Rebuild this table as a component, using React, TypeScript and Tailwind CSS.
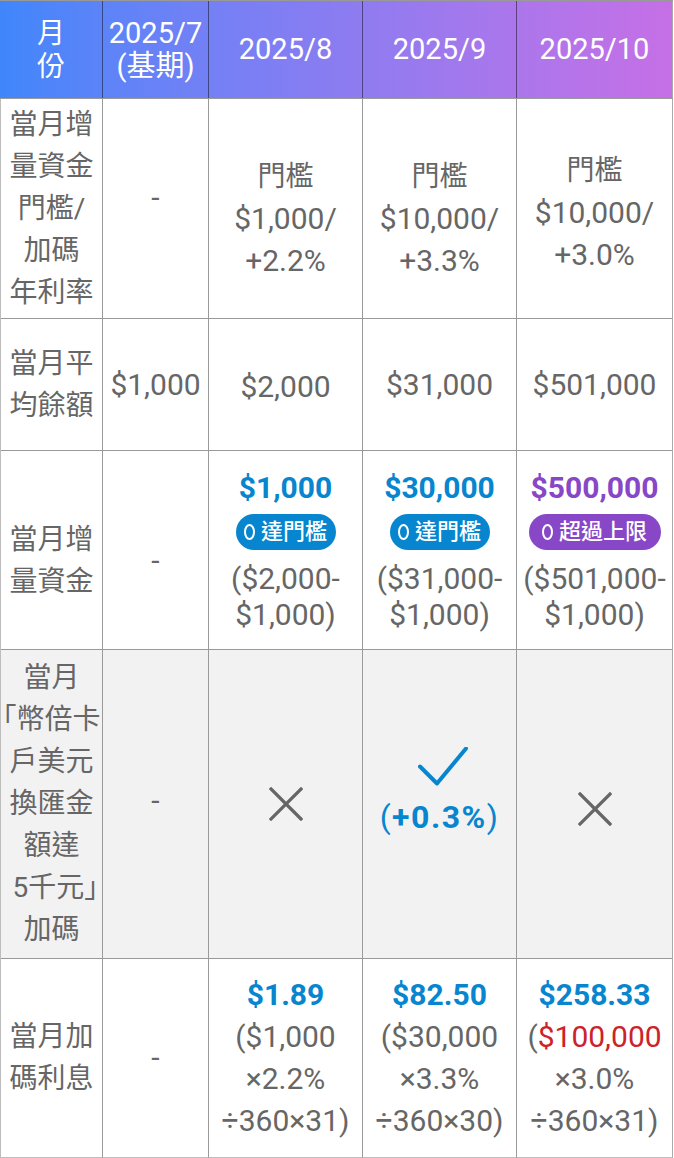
import React from "react";

const FONT = "[font-family:Roboto,'Noto_Sans_CJK_TC',sans-serif]";
const GRAY = "text-[#666666]";
const BLUE = "text-[#0786cf]";
const PURPLE = "text-[#8747c7]";

function Lines({ lines, className = "" }: { lines: React.ReactNode[]; className?: string }) {
  return (
    <>
      {lines.map((l, i) => (
        <div key={i} className={"whitespace-nowrap [text-spacing-trim:trim-start] " + className}>
          {l}
        </div>
      ))}
    </>
  );
}

const cell =
  "flex flex-col items-center justify-center text-center border-r border-b border-[#9a9a9a] text-[30px] leading-[42px] font-normal " +
  GRAY;

function Cross() {
  return (
    <svg width="34" height="34" viewBox="0 0 34 34" fill="none">
      <path d="M2 2 L32 32 M32 2 L2 32" stroke="#666666" strokeWidth="3.2" strokeLinecap="square" />
    </svg>
  );
}

function Check() {
  return (
    <svg width="50" height="40" viewBox="0 0 50 40" fill="none">
      <path d="M2 19.5 L19 36.5 L48 1.5" stroke="#0786cf" strokeWidth="4" strokeLinecap="round" strokeLinejoin="round" />
    </svg>
  );
}

function Badge({ label, color, w }: { label: string; color: string; w: string }) {
  return (
    <div
      className={
        "flex items-center justify-center h-[36px] rounded-full text-white text-[22px] leading-[36px] font-medium gap-[6px] " +
        color +
        " " +
        w
      }
    >
      <span className="block shrink-0 w-[11px] h-[16px] rounded-[50%] border-[2.5px] border-white" />
      <span>{label}</span>
    </div>
  );
}

const cjk = "text-[28px]";

export default function App() {
  const hcell =
    "flex flex-col items-center justify-center text-center border-r border-black/45 text-white text-[29px] leading-[33px]";
  return (
    <div className={"w-[673px] bg-white " + FONT}>
      {/* Header */}
      <div className="grid grid-cols-[103px_106px_154px_154px_156px] h-[99px] border-t border-b border-t-[#999999] border-b-[#9a9a9a] bg-linear-to-r from-[#3f86fb] via-[#8a7cf1] to-[#c66fe6]">
        <div className={hcell}>
          <Lines lines={["月", "份"]} className="text-[28px]" />
        </div>
        <div className={hcell}>
          <Lines lines={["2025/7", "(基期)"]} />
        </div>
        <div className={hcell}>2025/8</div>
        <div className={hcell}>2025/9</div>
        <div className="flex flex-col items-center justify-center text-center border-r border-[#aaaaaa] text-white text-[29px] leading-[33px]">
          2025/10
        </div>
      </div>

      {/* Body */}
      <div className="grid grid-cols-[102px_106px_154px_154px_156px] grid-rows-[220px_132px_199px_309px_199px] border-l border-[#bdbdbd]">
        {/* Row 1 */}
        <div className={cell}>
          <Lines lines={["當月增", "量資金", "門檻/", "加碼", "年利率"]} className={cjk} />
        </div>
        <div className={cell + " pb-[22px]"}>-</div>
        <div className={cell + " pt-[20px]"}>
          <Lines lines={[<span className={cjk}>門檻</span>, "$1,000/", "+2.2%"]} />
        </div>
        <div className={cell + " pt-[20px]"}>
          <Lines lines={[<span className={cjk}>門檻</span>, "$10,000/", "+3.3%"]} />
        </div>
        <div className={cell + " pt-[8px] border-r-[#aaaaaa]"}>
          <Lines lines={[<span className={cjk}>門檻</span>, "$10,000/", "+3.0%"]} />
        </div>

        {/* Row 2 */}
        <div className={cell}>
          <Lines lines={["當月平", "均餘額"]} className={cjk} />
        </div>
        <div className={cell}>$1,000</div>
        <div className={cell + " pt-[4px]"}>$2,000</div>
        <div className={cell}>$31,000</div>
        <div className={cell + " border-r-[#aaaaaa]"}>$501,000</div>

        {/* Row 3 */}
        <div className={cell + " pt-[22px]"}>
          <Lines lines={["當月增", "量資金"]} className={cjk} />
        </div>
        <div className={cell + " pt-[22px]"}>-</div>
        <div className={cell}>
          <div className={"font-bold text-[30px] leading-[42px] " + BLUE}>$1,000</div>
          <div className="mt-[5px]">
            <Badge label="達門檻" color="bg-[#0786cf]" w="w-[100px]" />
          </div>
          <div className="mt-[11px] leading-[36px]">
            <Lines lines={["($2,000-", "$1,000)"]} />
          </div>
        </div>
        <div className={cell}>
          <div className={"font-bold text-[30px] leading-[42px] " + BLUE}>$30,000</div>
          <div className="mt-[5px]">
            <Badge label="達門檻" color="bg-[#0786cf]" w="w-[100px]" />
          </div>
          <div className="mt-[11px] leading-[36px]">
            <Lines lines={["($31,000-", "$1,000)"]} />
          </div>
        </div>
        <div className={cell + " border-r-[#aaaaaa]"}>
          <div className={"font-bold text-[30px] leading-[42px] " + PURPLE}>$500,000</div>
          <div className="mt-[5px]">
            <Badge label="超過上限" color="bg-[#8747c7]" w="w-[132px]" />
          </div>
          <div className="mt-[11px] leading-[36px]">
            <Lines lines={["($501,000-", "$1,000)"]} />
          </div>
        </div>

        {/* Row 4 */}
        <div className={cell + " bg-[#f2f2f2]"}>
          <Lines
            lines={[
              "當月",
              "「幣倍卡",
              "戶美元",
              "換匯金",
              "額達",
              <span className="pl-[10px]">
                5千元<span className="-mr-[12px]">」</span>
              </span>,
              "加碼",
            ]}
            className={cjk}
          />
        </div>
        <div className={cell + " bg-[#f2f2f2] pb-[6px]"}>-</div>
        <div className={cell + " bg-[#f2f2f2]"}>
          <Cross />
        </div>
        <div className={cell + " bg-[#f2f2f2] pb-[24px]"}>
          <div className="ml-[7px]">
            <Check />
          </div>
          <div className={"text-[32px] leading-[40px] tracking-[1.5px] mt-[10px] " + BLUE}>
            <span className="font-normal">(</span>
            <span className="font-bold">+0.3%</span>
            <span className="font-normal">)</span>
          </div>
        </div>
        <div className={cell + " bg-[#f2f2f2] pt-[10px] border-r-[#aaaaaa]"}>
          <Cross />
        </div>

        {/* Row 5 */}
        <div className={cell + " border-b-[#bdbdbd]"}>
          <Lines lines={["當月加", "碼利息"]} className={cjk} />
        </div>
        <div className={cell + " border-b-[#bdbdbd]"}>-</div>
        <div className={cell + " border-b-[#bdbdbd]"}>
          <div className={"font-bold text-[30px] leading-[42px] " + BLUE}>$1.89</div>
          <Lines lines={["($1,000", "×2.2%", "÷360×31)"]} />
        </div>
        <div className={cell + " border-b-[#bdbdbd]"}>
          <div className={"font-bold text-[30px] leading-[42px] " + BLUE}>$82.50</div>
          <Lines lines={["($30,000", "×3.3%", "÷360×30)"]} />
        </div>
        <div className={cell + " border-b-[#bdbdbd] border-r-[#aaaaaa]"}>
          <div className={"font-bold text-[30px] leading-[42px] " + BLUE}>$258.33</div>
          <Lines
            lines={[
              <>
                (<span className="text-[#cc2229]">$100,000</span>
              </>,
              "×3.0%",
              "÷360×31)",
            ]}
          />
        </div>
      </div>
    </div>
  );
}
